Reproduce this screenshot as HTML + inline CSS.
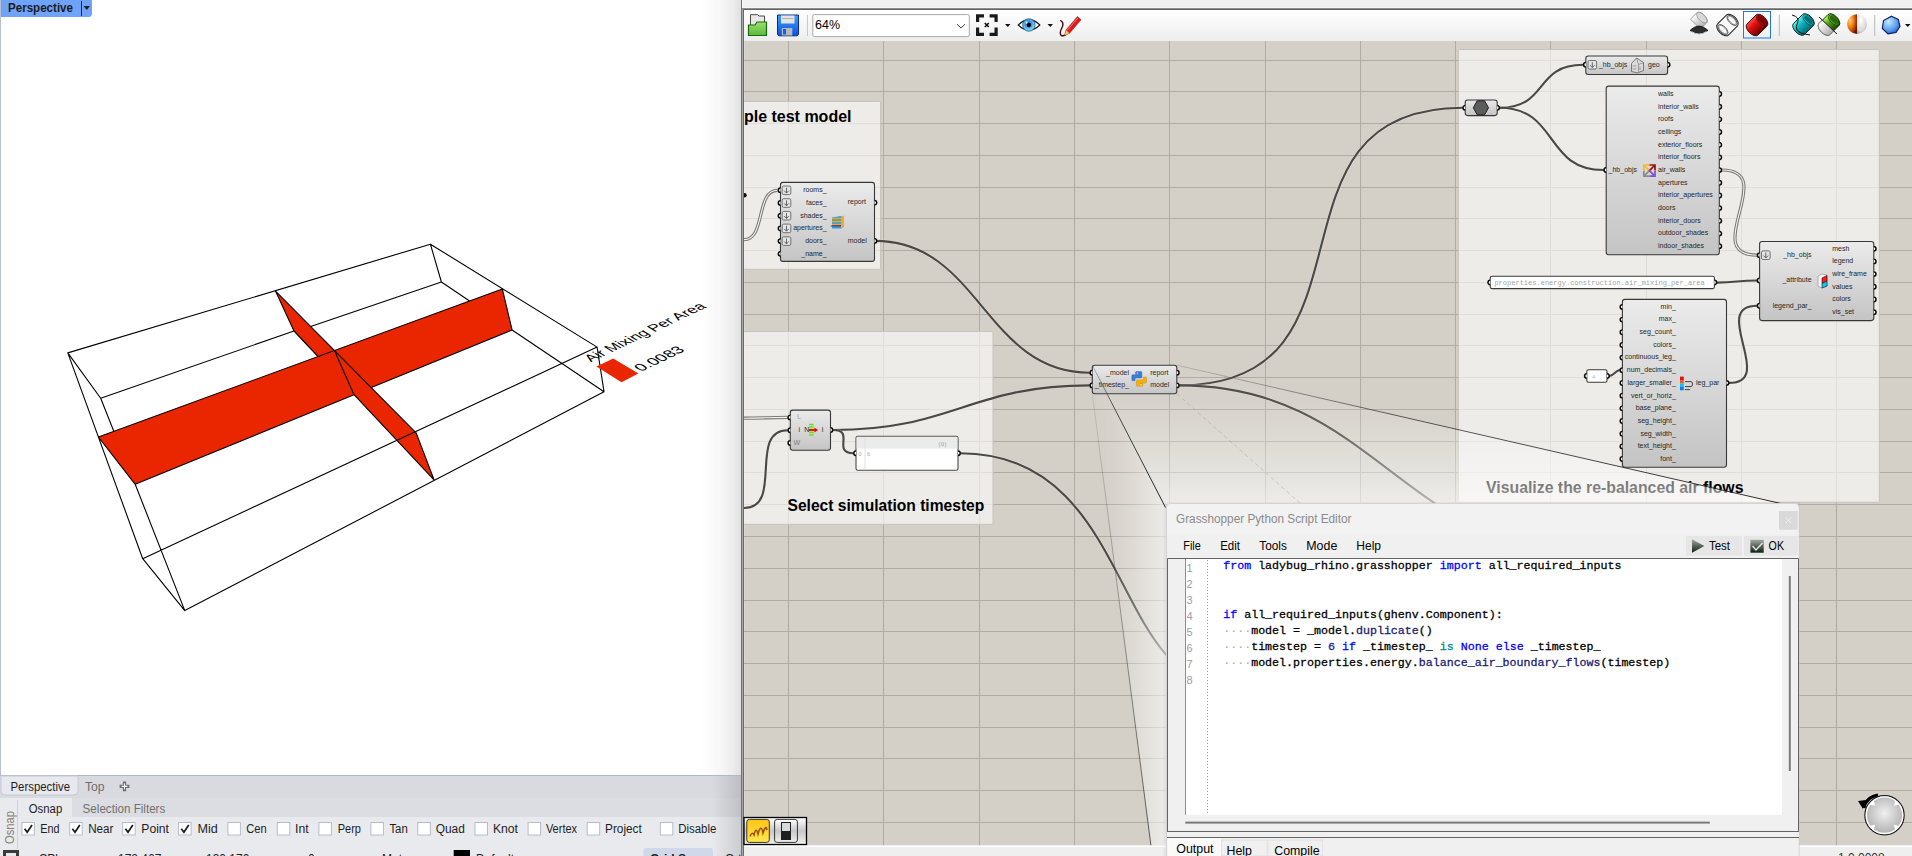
<!DOCTYPE html>
<html><head><meta charset="utf-8"><style>
html,body{margin:0;padding:0;width:1912px;height:856px;overflow:hidden;background:#fff}
svg{display:block}
svg{font-family:"Liberation Sans",sans-serif}
.mono{font-family:"Liberation Mono",monospace}
</style></head><body>
<svg width="1912" height="856" viewBox="0 0 1912 856">
<defs>
 <linearGradient id="vpEdge" x1="0" x2="1" y1="0" y2="0">
  <stop offset="0" stop-color="#ffffff"/>
  <stop offset="0.5" stop-color="#f7f7f7"/>
  <stop offset="0.8" stop-color="#ededed"/>
  <stop offset="1" stop-color="#e0e0e0"/>
 </linearGradient>
 <linearGradient id="compFill" x1="0" x2="0" y1="0" y2="1">
  <stop offset="0" stop-color="#ebebeb"/>
  <stop offset="1" stop-color="#c4c4c4"/>
 </linearGradient>
 <clipPath id="canvasClip"><rect x="744" y="41" width="1168" height="804.5"/></clipPath>
</defs>
<!-- ===== Rhino viewport ===== -->
<rect x="0" y="0" width="741" height="775" fill="#ffffff"/>
<rect x="700" y="0" width="41" height="775" fill="url(#vpEdge)"/>
<rect x="0" y="0" width="1" height="775" fill="#b8c0d0"/>
<path d="M1,0 H92 V15 L90,17 H1 Z" fill="#6ea3f9"/>
<text x="8" y="12" font-size="12" font-weight="bold" fill="#1c1c1c" textLength="65" lengthAdjust="spacingAndGlyphs">Perspective</text>
<rect x="81" y="1" width="1" height="15" fill="#222"/>
<path d="M83.5,6 L90,6 L86.75,10 Z" fill="#222"/>

<!-- model -->
<path d="M98.4,437.0 L502.3,289.0 L512.1,330.0 L135.2,484.3 Z" fill="#ea2600"/>
<path d="M275.6,291.2 L416.1,432.8 L434.0,479.8 L294.0,331.0 Z" fill="#ea2600"/>
<path d="M67.8,352.9 L430.4,244.2 M430.4,244.2 L597.1,347.1 M597.1,347.1 L142.7,558.7 M142.7,558.7 L67.8,352.9 M100.7,398.2 L294.0,331.0 M310.7,326.6 L441.4,282.0 M441.4,282.0 L469.6,301.0 M512.1,330.0 L604.0,391.7 M604.0,391.7 L184.8,610.6 M184.8,610.6 L135.2,484.3 M113.8,431.3 L100.7,398.2 M67.8,352.9 L100.7,398.2 M430.4,244.2 L441.4,282.0 M597.1,347.1 L604.0,391.7 M142.7,558.7 L184.8,610.6 M98.4,437.0 L502.3,289.0 M502.3,289.0 L512.1,330.0 M98.4,437.0 L135.2,484.3 M135.2,484.3 L354.0,394.7 M371.3,387.6 L512.1,330.0 M275.6,291.2 L416.1,432.8 M416.1,432.8 L434.0,479.8 M275.6,291.2 L294.0,331.0 M294.0,331.0 L318.0,356.5 M354.0,394.7 L434.0,479.8 M334.4,350.5 L354.0,394.7" stroke="#000" stroke-width="1.1" fill="none" stroke-linecap="round"/>
<path d="M596.4,366.5 L613.3,358.4 L638.4,373.6 L621.5,382.3 Z" fill="#ea2600"/>
<text font-size="10" fill="#000" transform="matrix(1.3550,-0.6434,1.2339,0.7612,591,362.2)">Air Mixing Per Area</text>
<text font-size="10" fill="#000" transform="matrix(1.4634,-0.6949,1.2339,0.7612,641,371.8)">0.0083</text>
<!-- ===== bottom rhino panel ===== -->
<rect x="0" y="775" width="741" height="81" fill="#d9dadf"/>
<rect x="0" y="775" width="741" height="1" fill="#b0b8cc"/>
<rect x="0" y="776" width="741" height="22" fill="#d9dadf"/>
<path d="M1,776 H78 V791 Q78,795 74,795 H5 Q1,795 1,791 Z" fill="#e8e9ee" stroke="#c5cad6" stroke-width="1"/>
<text x="10.5" y="791" font-size="12" fill="#1e1e1e" textLength="59.5" lengthAdjust="spacingAndGlyphs">Perspective</text>
<text x="85" y="791" font-size="12" fill="#707070" textLength="19.6" lengthAdjust="spacingAndGlyphs">Top</text>
<path d="M121.2,786.4 H127.8 M124.5,783.1 V789.7" stroke="#6e6e6e" stroke-width="3.2" stroke-linecap="square" fill="none"/>
<path d="M121.6,786.4 H127.4 M124.5,783.5 V789.3" stroke="#ffffff" stroke-width="1.1" fill="none"/>
<rect x="0" y="798" width="741" height="51" fill="#e9eaee"/>
<rect x="72" y="798" width="669" height="19" fill="#dcdde2"/>
<path d="M18,817 V798 H66 Q72,798 72,804 V817 Z" fill="#e9eaee"/>
<rect x="0" y="798" width="17" height="51" fill="#e9eaee"/>
<path d="M17.5,800 V849" stroke="#cdd1da" stroke-width="1"/>
<text transform="translate(13.5,844) rotate(-90)" font-size="12" fill="#8a7f75" textLength="33" lengthAdjust="spacingAndGlyphs">Osnap</text>
<text x="28.8" y="813" font-size="12" fill="#1e1e1e" textLength="33.4" lengthAdjust="spacingAndGlyphs">Osnap</text>
<text x="82.6" y="813" font-size="12" fill="#707070" textLength="82.7" lengthAdjust="spacingAndGlyphs">Selection Filters</text>
<rect x="21.9" y="822.5" width="12.5" height="12.5" fill="#fff" stroke="#b4bccc" stroke-width="1"/>
<path d="M24.6,828.8 L27.2,832.2 L32.0,825" stroke="#1a1a1a" stroke-width="1.7" fill="none"/>
<text x="40.3" y="833" font-size="12" fill="#1e1e1e" textLength="19.3" lengthAdjust="spacingAndGlyphs">End</text>
<rect x="69.7" y="822.5" width="12.5" height="12.5" fill="#fff" stroke="#b4bccc" stroke-width="1"/>
<path d="M72.4,828.8 L75.0,832.2 L79.8,825" stroke="#1a1a1a" stroke-width="1.7" fill="none"/>
<text x="88.2" y="833" font-size="12" fill="#1e1e1e" textLength="25.2" lengthAdjust="spacingAndGlyphs">Near</text>
<rect x="122.7" y="822.5" width="12.5" height="12.5" fill="#fff" stroke="#b4bccc" stroke-width="1"/>
<path d="M125.4,828.8 L128.0,832.2 L132.8,825" stroke="#1a1a1a" stroke-width="1.7" fill="none"/>
<text x="141.3" y="833" font-size="12" fill="#1e1e1e" textLength="27.7" lengthAdjust="spacingAndGlyphs">Point</text>
<rect x="178.6" y="822.5" width="12.5" height="12.5" fill="#fff" stroke="#b4bccc" stroke-width="1"/>
<path d="M181.3,828.8 L183.9,832.2 L188.7,825" stroke="#1a1a1a" stroke-width="1.7" fill="none"/>
<text x="197.4" y="833" font-size="12" fill="#1e1e1e" textLength="20.3" lengthAdjust="spacingAndGlyphs">Mid</text>
<rect x="227.9" y="822.5" width="12.5" height="12.5" fill="#fff" stroke="#b4bccc" stroke-width="1"/>
<text x="246.2" y="833" font-size="12" fill="#1e1e1e" textLength="20.5" lengthAdjust="spacingAndGlyphs">Cen</text>
<rect x="277.3" y="822.5" width="12.5" height="12.5" fill="#fff" stroke="#b4bccc" stroke-width="1"/>
<text x="295.1" y="833" font-size="12" fill="#1e1e1e" textLength="13.6" lengthAdjust="spacingAndGlyphs">Int</text>
<rect x="318.9" y="822.5" width="12.5" height="12.5" fill="#fff" stroke="#b4bccc" stroke-width="1"/>
<text x="337.7" y="833" font-size="12" fill="#1e1e1e" textLength="23.3" lengthAdjust="spacingAndGlyphs">Perp</text>
<rect x="370.9" y="822.5" width="12.5" height="12.5" fill="#fff" stroke="#b4bccc" stroke-width="1"/>
<text x="389.4" y="833" font-size="12" fill="#1e1e1e" textLength="18.4" lengthAdjust="spacingAndGlyphs">Tan</text>
<rect x="417.8" y="822.5" width="12.5" height="12.5" fill="#fff" stroke="#b4bccc" stroke-width="1"/>
<text x="435.7" y="833" font-size="12" fill="#1e1e1e" textLength="29.2" lengthAdjust="spacingAndGlyphs">Quad</text>
<rect x="475.0" y="822.5" width="12.5" height="12.5" fill="#fff" stroke="#b4bccc" stroke-width="1"/>
<text x="493" y="833" font-size="12" fill="#1e1e1e" textLength="25" lengthAdjust="spacingAndGlyphs">Knot</text>
<rect x="528.1" y="822.5" width="12.5" height="12.5" fill="#fff" stroke="#b4bccc" stroke-width="1"/>
<text x="545.9" y="833" font-size="12" fill="#1e1e1e" textLength="31.2" lengthAdjust="spacingAndGlyphs">Vertex</text>
<rect x="587.2" y="822.5" width="12.5" height="12.5" fill="#fff" stroke="#b4bccc" stroke-width="1"/>
<text x="605" y="833" font-size="12" fill="#1e1e1e" textLength="36.8" lengthAdjust="spacingAndGlyphs">Project</text>
<rect x="660.3" y="822.5" width="12.5" height="12.5" fill="#fff" stroke="#b4bccc" stroke-width="1"/>
<text x="678.2" y="833" font-size="12" fill="#1e1e1e" textLength="38.1" lengthAdjust="spacingAndGlyphs">Disable</text>
<rect x="0" y="849" width="741" height="7" fill="#e9eaee"/>
<rect x="4.5" y="851.5" width="13" height="10" fill="none" stroke="#3a3a3a" stroke-width="3"/>
<text x="38.7" y="863" font-size="12" fill="#1e1e1e">CPl</text>
<text x="118" y="863" font-size="12" fill="#1e1e1e">172.467</text>
<text x="206" y="863" font-size="12" fill="#1e1e1e">130.170</text>
<text x="308" y="863" font-size="12" fill="#1e1e1e">0</text>
<text x="382" y="863" font-size="12" fill="#1e1e1e">Meters</text>
<text x="476" y="863" font-size="12" fill="#1e1e1e">Default</text>
<text x="725" y="863" font-size="12" fill="#1e1e1e">Ortho</text>
<rect x="453.7" y="850" width="16.3" height="10" fill="#000"/>
<rect x="643.5" y="848" width="69.4" height="10" rx="2" fill="#d0d8ea"/>
<text x="650" y="863" font-size="12" font-weight="bold" fill="#1e1e1e">Grid Snap</text>
<defs><linearGradient id="panEdge" x1="0" x2="1" y1="0" y2="0"><stop offset="0" stop-color="#000" stop-opacity="0"/><stop offset="1" stop-color="#000" stop-opacity="0.13"/></linearGradient></defs>
<rect x="712" y="776" width="29" height="80" fill="url(#panEdge)"/>
<!-- ===== GH window ===== -->
<rect x="741" y="0" width="1171" height="856" fill="#f0f0f0"/>
<rect x="741" y="0" width="1" height="856" fill="#727272"/>
<rect x="742" y="0" width="1" height="8" fill="#f6f6f6"/>
<rect x="742" y="9" width="1" height="847" fill="#a6a6a6"/>
<rect x="743" y="9" width="1" height="847" fill="#6a6a6a"/>
<rect x="742" y="7" width="1170" height="1" fill="#f5f5f5"/>
<rect x="742" y="8" width="1170" height="1" fill="#8c8c8c"/>
<rect x="743" y="9" width="1169" height="1" fill="#646464"/>
<rect x="744" y="10" width="1168" height="31" fill="#fafafa"/>
<defs><linearGradient id="tbG" x1="0" x2="0" y1="0" y2="1"><stop offset="0" stop-color="#ffffff"/><stop offset="1" stop-color="#ededed"/></linearGradient><linearGradient id="fgG" x1="0" x2="0" y1="0" y2="1"><stop offset="0" stop-color="#9be070"/><stop offset="1" stop-color="#5cb838"/></linearGradient><linearGradient id="flG" x1="0" x2="0" y1="0" y2="1"><stop offset="0" stop-color="#40a0ff"/><stop offset="1" stop-color="#0a50e0"/></linearGradient><radialGradient id="redCyl" cx="0.35" cy="0.3" r="0.8"><stop offset="0" stop-color="#ff8080"/><stop offset="0.5" stop-color="#d01010"/><stop offset="1" stop-color="#700000"/></radialGradient><radialGradient id="cyanCyl" cx="0.4" cy="0.3" r="0.8"><stop offset="0" stop-color="#a0ffff"/><stop offset="0.5" stop-color="#10b8c8"/><stop offset="1" stop-color="#006070"/></radialGradient><radialGradient id="grnCyl" cx="0.4" cy="0.3" r="0.8"><stop offset="0" stop-color="#d0ff90"/><stop offset="0.5" stop-color="#60b010"/><stop offset="1" stop-color="#2a5a00"/></radialGradient><radialGradient id="graySph" cx="0.35" cy="0.3" r="0.8"><stop offset="0" stop-color="#ffffff"/><stop offset="0.6" stop-color="#d0d0d0"/><stop offset="1" stop-color="#808080"/></radialGradient><radialGradient id="blueSph" cx="0.35" cy="0.3" r="0.8"><stop offset="0" stop-color="#c8e8ff"/><stop offset="0.6" stop-color="#5aa0f0"/><stop offset="1" stop-color="#2050b0"/></radialGradient><radialGradient id="navG" cx="0.5" cy="0.45" r="0.6"><stop offset="0" stop-color="#f0f0f0"/><stop offset="1" stop-color="#a8a8a8"/></radialGradient><linearGradient id="silverG" x1="0" x2="0" y1="0" y2="1"><stop offset="0" stop-color="#ffffff"/><stop offset="0.5" stop-color="#c8c8c8"/><stop offset="1" stop-color="#f0f0f0"/></linearGradient><linearGradient id="yelG" x1="0" x2="0" y1="0" y2="1"><stop offset="0" stop-color="#ffc414"/><stop offset="1" stop-color="#ffe850"/></linearGradient></defs>
<rect x="744" y="10" width="1168" height="31" fill="url(#tbG)"/><rect x="744" y="41" width="1168" height="804.5" fill="#dad6d0" fill-opacity="0"/>
<path d="M750.5,30 V14.7 H757.5 L759,16 H764.5 V30 Z" fill="#e8e8e8" stroke="#4a4a4a" stroke-width="1"/>
<path d="M748.5,35.5 V25 H755 L757,22 H766.5 V35.5 Z" fill="url(#fgG)" stroke="#1a6a10" stroke-width="1.2"/>
<path d="M777.5,15 H798.5 V34.5 L797,35.8 H779 L777.5,34.5 Z" fill="url(#flG)" stroke="#0a2a80" stroke-width="1"/>
<rect x="781" y="15.5" width="13.5" height="8" fill="#e4e4e4"/><rect x="782" y="18" width="11.5" height="1" fill="#b0b0b0"/>
<rect x="781.8" y="28" width="10.5" height="7.5" fill="#b8b8b8"/><rect x="783" y="29" width="3" height="5.5" fill="#1060f0"/>
<rect x="807" y="15" width="1" height="21" fill="#c8c8c8"/>
<rect x="812.8" y="14.6" width="156.5" height="22" rx="1.5" fill="#ffffff" stroke="#a8a8a8" stroke-width="1"/>
<text x="815" y="29.4" font-size="12.5" fill="#000">64%</text>
<path d="M957,24.2 L961,28 L965,24.2" stroke="#444" stroke-width="1" fill="none"/>
<path d="M977.6,22 V15.8 H984 M989.6,15.8 H996.1 V22 M996.1,27.4 V34.3 H989.6 M984,34.3 H977.6 V27.4" stroke="#1a1a1a" stroke-width="3.2" fill="none"/>
<path d="M984.8,23 L988.8,27 M988.8,23 L984.8,27" stroke="#111" stroke-width="1.6"/>
<path d="M1005,24 H1010.5 L1007.75,27 Z" fill="#111"/>
<defs><radialGradient id="irisG" cx="0.45" cy="0.4" r="0.6"><stop offset="0" stop-color="#2050c0"/><stop offset="0.35" stop-color="#3a90e0"/><stop offset="1" stop-color="#90e8ff"/></radialGradient></defs>
<path d="M1018.3,25 Q1029,14.5 1039.8,25 Q1029,35.5 1018.3,25 Z" fill="#ffffff" stroke="#1a1a1a" stroke-width="1.2"/>
<circle cx="1028.9" cy="25" r="6.2" fill="url(#irisG)" stroke="#0a5a80" stroke-width="0.8"/><circle cx="1028.9" cy="25" r="2.2" fill="#000"/><circle cx="1026.6" cy="22.6" r="1.1" fill="#fff"/>
<path d="M1047.5,24 H1053 L1050.25,27 Z" fill="#111"/>
<path d="M1060.2,20.3 Q1064,22 1062.5,26.5 Q1059,33 1061,35.3 Q1063,36.5 1066,34.6" stroke="#3a0808" stroke-width="1.4" fill="none"/>
<path d="M1064.5,35.5 L1066,30 L1077.5,16.5 L1081,19.8 L1069.5,33.3 Z" fill="#e01818" stroke="#7a1010" stroke-width="0.5"/>
<path d="M1064.5,35.5 L1066,30 L1069.5,33.3 Z" fill="#f0c060"/><path d="M1067,30.5 L1078,17.8" stroke="#ff9090" stroke-width="0.8"/>
<defs><linearGradient id="redB" x1="0" x2="0" y1="0" y2="1"><stop offset="0" stop-color="#ff4a4a"/><stop offset="0.35" stop-color="#e01010"/><stop offset="1" stop-color="#6a0000"/></linearGradient><linearGradient id="cyanB" x1="0" x2="0" y1="0" y2="1"><stop offset="0" stop-color="#60f0f0"/><stop offset="0.4" stop-color="#10b0b8"/><stop offset="1" stop-color="#006a70"/></linearGradient><linearGradient id="grnB" x1="0" x2="0" y1="0" y2="1"><stop offset="0" stop-color="#c0ff60"/><stop offset="0.4" stop-color="#50a010"/><stop offset="1" stop-color="#1a4a00"/></linearGradient><linearGradient id="grayB" x1="0" x2="0" y1="0" y2="1"><stop offset="0" stop-color="#ffffff"/><stop offset="1" stop-color="#b0b0b0"/></linearGradient><radialGradient id="sphO" cx="0.3" cy="0.3" r="0.8"><stop offset="0" stop-color="#ffd080"/><stop offset="0.45" stop-color="#f08010"/><stop offset="1" stop-color="#701000"/></radialGradient><radialGradient id="sphW" cx="0.4" cy="0.3" r="0.9"><stop offset="0" stop-color="#ffffff"/><stop offset="0.6" stop-color="#dadada"/><stop offset="1" stop-color="#707070"/></radialGradient></defs>
<g transform="translate(1699,20.5) rotate(-45)"><path d="M-5,-7 L4,-7 A3.5,7 0 0 1 4,7 L-5,7 Z" fill="url(#grayB)" stroke="#888" stroke-width="0.8"/><ellipse cx="4" cy="0" rx="3.3" ry="6.6" fill="#d8d8d8" stroke="#888" stroke-width="0.6"/></g>
<path d="M1690,30.5 Q1699,21.5 1708,30.5 Q1699,37 1690,30.5 Z" fill="#2e2e2e" stroke="#111" stroke-width="0.8"/><path d="M1691.5,31.5 Q1699,36.5 1706.5,31.5" stroke="#e8e8e8" stroke-width="0.8" fill="none"/>
<g transform="translate(1727.5,25) rotate(-45)"><path d="M-6.5,-7.75 L6.5,-7.75 A4.2,7.75 0 0 1 6.5,7.75 L-6.5,7.75 A4.2,7.75 0 0 1 -6.5,-7.75 Z" fill="#fafafa" stroke="#1a1a1a" stroke-width="0.95"/><ellipse cx="6.5" cy="0" rx="3.2" ry="6.4" fill="none" stroke="#222" stroke-width="0.7"/><ellipse cx="6.5" cy="0" rx="2.3" ry="5.2" fill="none" stroke="#444" stroke-width="0.5"/><ellipse cx="-6.5" cy="0" rx="3.2" ry="6.4" fill="none" stroke="#222" stroke-width="0.7"/><ellipse cx="-6.5" cy="0" rx="2.3" ry="5.2" fill="none" stroke="#444" stroke-width="0.5"/></g>
<rect x="1743.5" y="11.5" width="27" height="26.5" fill="none" stroke="#1a7ae8" stroke-width="1"/>
<g transform="translate(1757,25) rotate(-45)"><path d="M-6.5,-7.75 L6.5,-7.75 A4.2,7.75 0 0 1 6.5,7.75 L-6.5,7.75 A4.2,7.75 0 0 1 -6.5,-7.75 Z" fill="url(#redB)" stroke="#3a0000" stroke-width="0.9"/><ellipse cx="6.5" cy="0" rx="3.3" ry="6.6" fill="#c00808" stroke="#3a0000" stroke-width="0.6"/><ellipse cx="6.8" cy="0.3" rx="2.4" ry="5.3" fill="#7a0000"/></g>
<rect x="1778.8" y="15" width="1" height="21" fill="#b8b8b8"/>
<g transform="translate(1803.5,24.5) rotate(-45)"><path d="M-6.5,-7.75 L6.5,-7.75 A4.2,7.75 0 0 1 6.5,7.75 L-6.5,7.75 A4.2,7.75 0 0 1 -6.5,-7.75 Z" fill="url(#cyanB)" stroke="#002a2a" stroke-width="0.9"/><ellipse cx="6.5" cy="0" rx="3.3" ry="6.6" fill="#20c8d0" stroke="#002a2a" stroke-width="0.6"/><ellipse cx="6.8" cy="0.3" rx="2.4" ry="5.3" fill="#007078"/></g>
<path d="M1792,15 Q1800,17 1797.5,23 Q1794,30 1801,33 Q1806,34.5 1810,35" stroke="#111" stroke-width="1" fill="none"/>
<g transform="translate(1829,24.5) rotate(-45)"><path d="M-6.5,-7.75 L6.5,-7.75 A4.2,7.75 0 0 1 6.5,7.75 L-6.5,7.75 A4.2,7.75 0 0 1 -6.5,-7.75 Z" fill="url(#grnB)" stroke="#0a2a00" stroke-width="0.9"/><path d="M-6.5,-7.75 L-1,-7.75 L-1,7.75 L-6.5,7.75 A4.2,7.75 0 0 1 -6.5,-7.75 Z" fill="url(#grayB)" stroke="#777" stroke-width="0.6"/><ellipse cx="6.5" cy="0" rx="3.3" ry="6.6" fill="#60b020" stroke="#0a2a00" stroke-width="0.6"/><ellipse cx="6.8" cy="0.3" rx="2.4" ry="5.3" fill="#2a6a00"/></g>
<path d="M1819,17 L1837,34" stroke="#111" stroke-width="1"/>
<path d="M1857,14.2 A9.9,9.9 0 0 0 1857,34 Z" fill="url(#sphO)"/><path d="M1857,14.2 A9.9,9.9 0 0 1 1857,34 Z" fill="url(#sphW)"/>
<rect x="1874.2" y="15" width="1" height="21" fill="#b8b8b8"/>
<path d="M1891.5,16.2 L1898.3,19.4 L1900,26.5 L1896,32.5 L1888,33.9 L1882.3,28.5 L1883.5,20.5 Z" fill="url(#blueSph)" stroke="#0a1a6a" stroke-width="1.1"/>
<path d="M1905,24 H1910.5 L1907.75,27 Z" fill="#111"/>
<rect x="744" y="41" width="1168" height="804.5" fill="#d4d0c8"/><rect x="744" y="41" width="1" height="804.5" fill="#dcd8d2"/>
<path d="M788.5,41 V845.5 M883.5,41 V845.5 M979.5,41 V845.5 M1074.5,41 V845.5 M1169.5,41 V845.5 M1265.5,41 V845.5 M1360.5,41 V845.5 M1455.5,41 V845.5 M1550.5,41 V845.5 M1646.5,41 V845.5 M1741.5,41 V845.5 M1836.5,41 V845.5 M744,60.5 H1912 M744,91.5 H1912 M744,123.5 H1912 M744,155.5 H1912 M744,187.5 H1912 M744,218.5 H1912 M744,250.5 H1912 M744,282.5 H1912 M744,314.5 H1912 M744,345.5 H1912 M744,377.5 H1912 M744,409.5 H1912 M744,441.5 H1912 M744,472.5 H1912 M744,504.5 H1912 M744,536.5 H1912 M744,568.5 H1912 M744,600.5 H1912 M744,631.5 H1912 M744,663.5 H1912 M744,695.5 H1912 M744,727.5 H1912 M744,758.5 H1912 M744,790.5 H1912 M744,822.5 H1912" stroke="#b0aca4" stroke-width="1" fill="none"/>
<g clip-path="url(#canvasClip)">
<rect x="720" y="101.5" width="160.5" height="167.8" rx="1" fill="#ffffff" fill-opacity="0.6" stroke="#c6c3bc" stroke-width="1"/>
<text x="851.5" y="122.3" font-size="16" font-weight="bold" fill="#000" text-anchor="end">Create a simple test model</text>
<rect x="720" y="331.5" width="273" height="192.8" rx="1" fill="#ffffff" fill-opacity="0.6" stroke="#c6c3bc" stroke-width="1"/>
<text x="787.5" y="510.5" font-size="16" font-weight="bold" fill="#000" textLength="196.8" lengthAdjust="spacingAndGlyphs">Select simulation timestep</text>
<rect x="1458.3" y="49.5" width="421" height="452.7" rx="1" fill="#ffffff" fill-opacity="0.6" stroke="#c6c3bc" stroke-width="1"/>
<text x="1486" y="493.4" font-size="16" font-weight="bold" fill="#000" textLength="257.5" lengthAdjust="spacingAndGlyphs">Visualize the re-balanced air flows</text>
<path d="M744,239.6 C766,239.6 755.5,190.3 777.5,190.3" stroke="#7a7874" stroke-width="3.2" fill="none"/><path d="M744,239.6 C766,239.6 755.5,190.3 777.5,190.3" stroke="#f4f4f2" stroke-width="1.1" fill="none"/>
<path d="M875,240.9 C980,240.9 984.8,372.7 1089.8,372.7" stroke="#f0eee9" stroke-opacity="0.35" stroke-width="3.2" fill="none"/><path d="M875,240.9 C980,240.9 984.8,372.7 1089.8,372.7" stroke="#4a4844" stroke-width="2.1" fill="none"/>
<path d="M744,418.2 C764,418.2 767.6,417.4 787.6,417.4" stroke="#7a7874" stroke-width="3.2" fill="none"/><path d="M744,418.2 C764,418.2 767.6,417.4 787.6,417.4" stroke="#f4f4f2" stroke-width="1.1" fill="none"/>
<path d="M744,508 C784,508 747.6,430.2 787.6,430.2" stroke="#f0eee9" stroke-opacity="0.35" stroke-width="3.2" fill="none"/><path d="M744,508 C784,508 747.6,430.2 787.6,430.2" stroke="#4a4844" stroke-width="2.1" fill="none"/>
<path d="M833.3,430 C953.3,430 969.8,385.4 1089.8,385.4" stroke="#f0eee9" stroke-opacity="0.35" stroke-width="3.2" fill="none"/><path d="M833.3,430 C953.3,430 969.8,385.4 1089.8,385.4" stroke="#4a4844" stroke-width="2.1" fill="none"/>
<path d="M833.3,430 C855.3,430 831.5,453.2 853.5,453.2" stroke="#f0eee9" stroke-opacity="0.35" stroke-width="3.2" fill="none"/><path d="M833.3,430 C855.3,430 831.5,453.2 853.5,453.2" stroke="#4a4844" stroke-width="2.1" fill="none"/>
<path d="M960.5,453.2 C1132,453.2 1112.1,683.7 1225.3,683.7" stroke="#f0eee9" stroke-opacity="0.35" stroke-width="3.2" fill="none"/><path d="M960.5,453.2 C1132,453.2 1112.1,683.7 1225.3,683.7" stroke="#4a4844" stroke-width="2.1" fill="none"/>
<path d="M1179.3,385.4 C1391.3,385.4 1250.7,107.8 1462.7,107.8" stroke="#f0eee9" stroke-opacity="0.35" stroke-width="3.2" fill="none"/><path d="M1179.3,385.4 C1391.3,385.4 1250.7,107.8 1462.7,107.8" stroke="#4a4844" stroke-width="2.1" fill="none"/>
<path d="M1179.3,385.4 C1376.3,385.4 1401.6,554.2 1598.6,554.2" stroke="#f0eee9" stroke-opacity="0.35" stroke-width="3.2" fill="none"/><path d="M1179.3,385.4 C1376.3,385.4 1401.6,554.2 1598.6,554.2" stroke="#4a4844" stroke-width="2.1" fill="none"/>
<path d="M1499.2,107.8 C1549.2,107.8 1533.3,64.8 1583.3,64.8" stroke="#f0eee9" stroke-opacity="0.35" stroke-width="3.2" fill="none"/><path d="M1499.2,107.8 C1549.2,107.8 1533.3,64.8 1583.3,64.8" stroke="#4a4844" stroke-width="2.1" fill="none"/>
<path d="M1499.2,107.8 C1559.2,107.8 1543.7,170 1603.7,170" stroke="#f0eee9" stroke-opacity="0.35" stroke-width="3.2" fill="none"/><path d="M1499.2,107.8 C1559.2,107.8 1543.7,170 1603.7,170" stroke="#4a4844" stroke-width="2.1" fill="none"/>
<path d="M1721.8,170 C1779.8,170 1699.1,255.2 1757.1,255.2" stroke="#7a7874" stroke-width="3.2" fill="none"/><path d="M1721.8,170 C1779.8,170 1699.1,255.2 1757.1,255.2" stroke="#f4f4f2" stroke-width="1.1" fill="none"/>
<path d="M1716.9,282.6 C1736.9,282.6 1737.1,280.5 1757.1,280.5" stroke="#f0eee9" stroke-opacity="0.35" stroke-width="3.2" fill="none"/><path d="M1716.9,282.6 C1736.9,282.6 1737.1,280.5 1757.1,280.5" stroke="#4a4844" stroke-width="2.1" fill="none"/>
<path d="M1729,382.9 C1777,382.9 1709.1,305.7 1757.1,305.7" stroke="#f0eee9" stroke-opacity="0.35" stroke-width="3.2" fill="none"/><path d="M1729,382.9 C1777,382.9 1709.1,305.7 1757.1,305.7" stroke="#4a4844" stroke-width="2.1" fill="none"/>
<path d="M1609.5,376 C1612.5,376 1616.9,370 1619.9,370" stroke="#f0eee9" stroke-opacity="0.35" stroke-width="3.2" fill="none"/><path d="M1609.5,376 C1612.5,376 1616.9,370 1619.9,370" stroke="#4a4844" stroke-width="2.1" fill="none"/>
<circle cx="744.5" cy="195.2" r="2.2" fill="#111"/>
<rect x="780.5" y="182.4" width="94" height="79" rx="2.5" fill="url(#compFill)" stroke="#383838" stroke-width="1.1"/>
<path d="M780.5,188.1 A2.2,2.2 0 0 0 780.5,192.5" fill="#fff" stroke="#0a0a0a" stroke-width="1.5"/>
<rect x="782.2" y="186" width="8.6" height="8.6" rx="1.5" fill="#e4e4e4" stroke="#555" stroke-width="0.8"/><path d="M786.5,187.7 V192.9 M784.2,190.7 L786.5,193.1 L788.8,190.7" stroke="#555" stroke-width="0.9" fill="none"/>
<text x="826.6" y="192.15" font-size="7" fill="#262626" text-anchor="end" >rooms_</text>
<path d="M780.5,200.8 A2.2,2.2 0 0 0 780.5,205.2" fill="#fff" stroke="#0a0a0a" stroke-width="1.5"/>
<rect x="782.2" y="198.7" width="8.6" height="8.6" rx="1.5" fill="#e4e4e4" stroke="#555" stroke-width="0.8"/><path d="M786.5,200.4 V205.6 M784.2,203.4 L786.5,205.8 L788.8,203.4" stroke="#555" stroke-width="0.9" fill="none"/>
<text x="826.6" y="204.85" font-size="7" fill="#262626" text-anchor="end" >faces_</text>
<path d="M780.5,213.5 A2.2,2.2 0 0 0 780.5,217.9" fill="#fff" stroke="#0a0a0a" stroke-width="1.5"/>
<rect x="782.2" y="211.4" width="8.6" height="8.6" rx="1.5" fill="#e4e4e4" stroke="#555" stroke-width="0.8"/><path d="M786.5,213.1 V218.3 M784.2,216.1 L786.5,218.5 L788.8,216.1" stroke="#555" stroke-width="0.9" fill="none"/>
<text x="826.6" y="217.55" font-size="7" fill="#262626" text-anchor="end" >shades_</text>
<path d="M780.5,226.2 A2.2,2.2 0 0 0 780.5,230.6" fill="#fff" stroke="#0a0a0a" stroke-width="1.5"/>
<rect x="782.2" y="224.1" width="8.6" height="8.6" rx="1.5" fill="#e4e4e4" stroke="#555" stroke-width="0.8"/><path d="M786.5,225.8 V231 M784.2,228.8 L786.5,231.2 L788.8,228.8" stroke="#555" stroke-width="0.9" fill="none"/>
<text x="826.6" y="230.25" font-size="7" fill="#262626" text-anchor="end" >apertures_</text>
<path d="M780.5,238.9 A2.2,2.2 0 0 0 780.5,243.3" fill="#fff" stroke="#0a0a0a" stroke-width="1.5"/>
<rect x="782.2" y="236.8" width="8.6" height="8.6" rx="1.5" fill="#e4e4e4" stroke="#555" stroke-width="0.8"/><path d="M786.5,238.5 V243.7 M784.2,241.5 L786.5,243.9 L788.8,241.5" stroke="#555" stroke-width="0.9" fill="none"/>
<text x="826.6" y="242.95" font-size="7" fill="#262626" text-anchor="end" >doors_</text>
<path d="M780.5,251.6 A2.2,2.2 0 0 0 780.5,256" fill="#fff" stroke="#0a0a0a" stroke-width="1.5"/>
<text x="826.6" y="255.65" font-size="7" fill="#262626" text-anchor="end" >_name_</text>
<path d="M874.5,200.4 A2.2,2.2 0 0 1 874.5,204.8" fill="#fff" stroke="#0a0a0a" stroke-width="1.5"/>
<text x="847.7" y="204.45" font-size="7" fill="#262626" text-anchor="start" >report</text>
<path d="M874.5,238.7 A2.2,2.2 0 0 1 874.5,243.1" fill="#fff" stroke="#0a0a0a" stroke-width="1.5"/>
<text x="847.7" y="242.75" font-size="7" fill="#262626" text-anchor="start" >model</text>
<g transform="translate(830,215.5)"><path d="M2,2 L11,0.5 L14,2 V11 L11,13 H2 Z" fill="#2aa0d8"/><path d="M2,3 H11 M2,6 H11 M2,9 H11" stroke="#f5a623" stroke-width="1.3"/><path d="M11,1 L14,0 V11 L11,13 Z" fill="#f0a830"/><path d="M0,10.5 L3,9.5 H11 V11 H1 Z" fill="#6a3d8f"/></g>
<rect x="1092.3" y="365.2" width="84.5" height="28.5" rx="2.5" fill="url(#compFill)" stroke="#383838" stroke-width="1.1"/>
<path d="M1092.3,370.5 A2.2,2.2 0 0 0 1092.3,374.9" fill="#fff" stroke="#0a0a0a" stroke-width="1.5"/>
<text x="1129" y="374.55" font-size="7" fill="#262626" text-anchor="end" >_model</text>
<path d="M1092.3,383.2 A2.2,2.2 0 0 0 1092.3,387.6" fill="#fff" stroke="#0a0a0a" stroke-width="1.5"/>
<text x="1129" y="387.25" font-size="7" fill="#262626" text-anchor="end" >_timestep_</text>
<path d="M1176.8,370.5 A2.2,2.2 0 0 1 1176.8,374.9" fill="#fff" stroke="#0a0a0a" stroke-width="1.5"/>
<text x="1150.2" y="374.55" font-size="7" fill="#262626" text-anchor="start" >report</text>
<path d="M1176.8,383.2 A2.2,2.2 0 0 1 1176.8,387.6" fill="#fff" stroke="#0a0a0a" stroke-width="1.5"/>
<text x="1150.2" y="387.25" font-size="7" fill="#262626" text-anchor="start" >model</text>
<g transform="translate(1131.8,371.6) scale(0.92)"><path d="M5,0 H10 Q11,0 11,1 V6 Q11,7 10,7 H5 Q3.5,7 3.5,8.5 V10 H1 Q0,10 0,9 V4.5 Q0,3.5 1,3.5 H7 V3 H4 V1 Q4,0 5,0 Z" fill="#3b7bd6" stroke="#2a5aa0" stroke-width="0.4"/><circle cx="6" cy="1.6" r="0.7" fill="#fff"/><path d="M11,16 H6 Q5,16 5,15 V10 Q5,9 6,9 H11 Q12.5,9 12.5,7.5 V6 H15 Q16,6 16,7 V11.5 Q16,12.5 15,12.5 H9 V13 H12 V15 Q12,16 11,16 Z" fill="#f5b000" stroke="#c07a00" stroke-width="0.4"/><circle cx="10" cy="14.4" r="0.7" fill="#fff"/></g>
<rect x="790.3" y="410.1" width="40.2" height="40.2" rx="2.5" fill="url(#compFill)" stroke="#383838" stroke-width="1.1"/>
<path d="M790.3,415.2 A2.2,2.2 0 0 0 790.3,419.6" fill="#fff" stroke="#0a0a0a" stroke-width="1.5"/>
<text x="797" y="419.25" font-size="7" fill="#a0a0a0" text-anchor="start" >L</text>
<path d="M790.3,428 A2.2,2.2 0 0 0 790.3,432.4" fill="#fff" stroke="#0a0a0a" stroke-width="1.5"/>
<text x="798.6" y="432.05" font-size="7" fill="#262626" text-anchor="start" >i</text>
<path d="M790.3,440.8 A2.2,2.2 0 0 0 790.3,445.2" fill="#fff" stroke="#0a0a0a" stroke-width="1.5"/>
<text x="793.6" y="444.85" font-size="7" fill="#808080" text-anchor="start" >W</text>
<path d="M830.5,427.8 A2.2,2.2 0 0 1 830.5,432.2" fill="#fff" stroke="#0a0a0a" stroke-width="1.5"/>
<text x="821.8" y="431.85" font-size="7" fill="#262626" text-anchor="start" >i</text>
<text x="804.3" y="432.3" font-size="7" fill="#262626">N</text>
<g transform="translate(809,423.7)"><rect x="0" y="0" width="4.6" height="12" fill="#6ad83a"/><path d="M0,2 H4.6 M0,4.5 H4.6 M0,7.5 H4.6 M0,10 H4.6" stroke="#c8ff90" stroke-width="0.8"/><path d="M0,6.3 H6" stroke="#f00000" stroke-width="1.8"/><path d="M5.5,3.8 L9,6.3 L5.5,8.8 Z" fill="#f00000"/></g>
<rect x="856" y="436.3" width="102" height="33.9" rx="1.8" fill="#ffffff" stroke="#4a4a4a" stroke-width="1.1"/>
<rect x="856.6" y="436.9" width="100.8" height="11.7" fill="#ebebeb"/>
<rect x="864.5" y="437" width="1" height="32.6" fill="#e2e2e2"/>
<text x="938" y="445.5" font-size="6" fill="#9a9a9a" font-family="Liberation Serif">{0}</text>
<text x="858.5" y="455.8" font-size="6.2" fill="#a8a8a8" font-family="Liberation Serif">0</text>
<text x="867" y="455.8" font-size="6.2" fill="#a8a8a8" font-family="Liberation Serif">6</text>
<path d="M856,451 A2.2,2.2 0 0 0 856,455.4" fill="#fff" stroke="#0a0a0a" stroke-width="1.5"/>
<path d="M958,451 A2.2,2.2 0 0 1 958,455.4" fill="#fff" stroke="#0a0a0a" stroke-width="1.5"/>
<rect x="1465.2" y="100" width="32" height="15.6" rx="2.5" fill="url(#compFill)" stroke="#383838" stroke-width="1.1"/>
<path d="M1477.2,100.8 H1484.6 L1488.5,107.8 L1484.6,114.8 H1477.2 L1473.3,107.8 Z" fill="#5c5c5c" stroke="#1e1e1e" stroke-width="1"/>
<path d="M1465.2,105.6 A2.2,2.2 0 0 0 1465.2,110" fill="#fff" stroke="#0a0a0a" stroke-width="1.5"/>
<path d="M1497.2,105.6 A2.2,2.2 0 0 1 1497.2,110" fill="#fff" stroke="#0a0a0a" stroke-width="1.5"/>
<rect x="1585.8" y="56" width="81.8" height="18.5" rx="2.5" fill="url(#compFill)" stroke="#383838" stroke-width="1.1"/>
<path d="M1585.8,62.6 A2.2,2.2 0 0 0 1585.8,67" fill="#fff" stroke="#0a0a0a" stroke-width="1.5"/>
<rect x="1588" y="60.5" width="8.6" height="8.6" rx="1.5" fill="#e4e4e4" stroke="#555" stroke-width="0.8"/><path d="M1592.3,62.2 V67.4 M1590,65.2 L1592.3,67.6 L1594.6,65.2" stroke="#555" stroke-width="0.9" fill="none"/>
<text x="1627.3" y="66.65" font-size="7" fill="#262626" text-anchor="end" >_hb_objs</text>
<path d="M1667.6,62.6 A2.2,2.2 0 0 1 1667.6,67" fill="#fff" stroke="#0a0a0a" stroke-width="1.5"/>
<text x="1648" y="66.65" font-size="7" fill="#262626" text-anchor="start" >geo</text>
<path d="M1631.5,71.5 V63.5 L1636.5,58 L1643.5,62.5 V70.5 L1637.5,72.8 Z" fill="#dcdcdc" stroke="#606060" stroke-width="0.8"/><path d="M1636.5,58 L1638.5,64.5 L1643.5,62.5 M1638.5,64.5 V72.5 M1632.5,66 H1636.5 M1632.5,69 H1636.5 M1640,66.5 V70" stroke="#707070" stroke-width="0.6" fill="none"/>
<rect x="1606.2" y="86.1" width="113.1" height="168.6" rx="2.5" fill="url(#compFill)" stroke="#383838" stroke-width="1.1"/>
<path d="M1606.2,167.8 A2.2,2.2 0 0 0 1606.2,172.2" fill="#fff" stroke="#0a0a0a" stroke-width="1.5"/>
<text x="1637" y="171.85" font-size="7" fill="#262626" text-anchor="end" >_hb_objs</text>
<path d="M1719.3,91.8 A2.2,2.2 0 0 1 1719.3,96.2" fill="#fff" stroke="#0a0a0a" stroke-width="1.5"/>
<text x="1658" y="95.85" font-size="7" fill="#262626" text-anchor="start" >walls</text>
<path d="M1719.3,104.48 A2.2,2.2 0 0 1 1719.3,108.88" fill="#fff" stroke="#0a0a0a" stroke-width="1.5"/>
<text x="1658" y="108.53" font-size="7" fill="#262626" text-anchor="start" >interior_walls</text>
<path d="M1719.3,117.16 A2.2,2.2 0 0 1 1719.3,121.56" fill="#fff" stroke="#0a0a0a" stroke-width="1.5"/>
<text x="1658" y="121.21" font-size="7" fill="#262626" text-anchor="start" >roofs</text>
<path d="M1719.3,129.84 A2.2,2.2 0 0 1 1719.3,134.24" fill="#fff" stroke="#0a0a0a" stroke-width="1.5"/>
<text x="1658" y="133.89" font-size="7" fill="#262626" text-anchor="start" >ceilings</text>
<path d="M1719.3,142.52 A2.2,2.2 0 0 1 1719.3,146.92" fill="#fff" stroke="#0a0a0a" stroke-width="1.5"/>
<text x="1658" y="146.57" font-size="7" fill="#262626" text-anchor="start" >exterior_floors</text>
<path d="M1719.3,155.2 A2.2,2.2 0 0 1 1719.3,159.6" fill="#fff" stroke="#0a0a0a" stroke-width="1.5"/>
<text x="1658" y="159.25" font-size="7" fill="#262626" text-anchor="start" >interior_floors</text>
<path d="M1719.3,167.88 A2.2,2.2 0 0 1 1719.3,172.28" fill="#fff" stroke="#0a0a0a" stroke-width="1.5"/>
<text x="1658" y="171.93" font-size="7" fill="#262626" text-anchor="start" >air_walls</text>
<path d="M1719.3,180.56 A2.2,2.2 0 0 1 1719.3,184.96" fill="#fff" stroke="#0a0a0a" stroke-width="1.5"/>
<text x="1658" y="184.61" font-size="7" fill="#262626" text-anchor="start" >apertures</text>
<path d="M1719.3,193.24 A2.2,2.2 0 0 1 1719.3,197.64" fill="#fff" stroke="#0a0a0a" stroke-width="1.5"/>
<text x="1658" y="197.29" font-size="7" fill="#262626" text-anchor="start" >interior_apertures</text>
<path d="M1719.3,205.92 A2.2,2.2 0 0 1 1719.3,210.32" fill="#fff" stroke="#0a0a0a" stroke-width="1.5"/>
<text x="1658" y="209.97" font-size="7" fill="#262626" text-anchor="start" >doors</text>
<path d="M1719.3,218.6 A2.2,2.2 0 0 1 1719.3,223" fill="#fff" stroke="#0a0a0a" stroke-width="1.5"/>
<text x="1658" y="222.65" font-size="7" fill="#262626" text-anchor="start" >interior_doors</text>
<path d="M1719.3,231.28 A2.2,2.2 0 0 1 1719.3,235.68" fill="#fff" stroke="#0a0a0a" stroke-width="1.5"/>
<text x="1658" y="235.33" font-size="7" fill="#262626" text-anchor="start" >outdoor_shades</text>
<path d="M1719.3,243.96 A2.2,2.2 0 0 1 1719.3,248.36" fill="#fff" stroke="#0a0a0a" stroke-width="1.5"/>
<text x="1658" y="248.01" font-size="7" fill="#262626" text-anchor="start" >indoor_shades</text>
<g transform="translate(1643,164.2)" stroke-linecap="square" fill="none"><path d="M0.8,5.5 V0.8 H5.5 M1.2,1.2 L6,6" stroke="#f8b830" stroke-width="1.7"/><path d="M7.3,0.8 H12 V5.5 M11.6,1.2 L6.8,6" stroke="#a01010" stroke-width="1.7"/><path d="M0.8,7.3 V12 H5.5 M1.2,11.6 L6,6.8" stroke="#8a8e8a" stroke-width="1.7"/><path d="M12,7.3 V12 H7.3 M11.6,11.6 L6.8,6.8" stroke="#8050d0" stroke-width="1.7"/></g>
<rect x="1759.6" y="241.5" width="114.2" height="79.1" rx="2.5" fill="url(#compFill)" stroke="#383838" stroke-width="1.1"/>
<path d="M1759.6,253 A2.2,2.2 0 0 0 1759.6,257.4" fill="#fff" stroke="#0a0a0a" stroke-width="1.5"/>
<text x="1811.6" y="257.05" font-size="7" fill="#262626" text-anchor="end" >_hb_objs</text>
<path d="M1759.6,278.3 A2.2,2.2 0 0 0 1759.6,282.7" fill="#fff" stroke="#0a0a0a" stroke-width="1.5"/>
<text x="1811.6" y="282.35" font-size="7" fill="#262626" text-anchor="end" >_attribute</text>
<path d="M1759.6,303.5 A2.2,2.2 0 0 0 1759.6,307.9" fill="#fff" stroke="#0a0a0a" stroke-width="1.5"/>
<text x="1811.6" y="307.55" font-size="7" fill="#262626" text-anchor="end" >legend_par_</text>
<rect x="1761.5" y="250.9" width="8.6" height="8.6" rx="1.5" fill="#e4e4e4" stroke="#555" stroke-width="0.8"/><path d="M1765.8,252.6 V257.8 M1763.5,255.6 L1765.8,258 L1768.1,255.6" stroke="#555" stroke-width="0.9" fill="none"/>
<path d="M1873.8,246.5 A2.2,2.2 0 0 1 1873.8,250.9" fill="#fff" stroke="#0a0a0a" stroke-width="1.5"/>
<text x="1832.2" y="250.55" font-size="7" fill="#262626" text-anchor="start" >mesh</text>
<path d="M1873.8,259.2 A2.2,2.2 0 0 1 1873.8,263.6" fill="#fff" stroke="#0a0a0a" stroke-width="1.5"/>
<text x="1832.2" y="263.25" font-size="7" fill="#262626" text-anchor="start" >legend</text>
<path d="M1873.8,271.9 A2.2,2.2 0 0 1 1873.8,276.3" fill="#fff" stroke="#0a0a0a" stroke-width="1.5"/>
<text x="1832.2" y="275.95" font-size="7" fill="#262626" text-anchor="start" >wire_frame</text>
<path d="M1873.8,284.6 A2.2,2.2 0 0 1 1873.8,289" fill="#fff" stroke="#0a0a0a" stroke-width="1.5"/>
<text x="1832.2" y="288.65" font-size="7" fill="#262626" text-anchor="start" >values</text>
<path d="M1873.8,297.3 A2.2,2.2 0 0 1 1873.8,301.7" fill="#fff" stroke="#0a0a0a" stroke-width="1.5"/>
<text x="1832.2" y="301.35" font-size="7" fill="#262626" text-anchor="start" >colors</text>
<path d="M1873.8,310 A2.2,2.2 0 0 1 1873.8,314.4" fill="#fff" stroke="#0a0a0a" stroke-width="1.5"/>
<text x="1832.2" y="314.05" font-size="7" fill="#262626" text-anchor="start" >vis_set</text>
<g transform="translate(1818,274)"><path d="M0,2 L4,0 L9,1 V12 L4,14 L0,12 Z" fill="#f4f4f4" stroke="#888" stroke-width="0.6"/><path d="M4,4 L9,1.5 V7 L4,9.5 Z" fill="#ff1a1a" stroke="#111" stroke-width="0.6"/><path d="M4,9.5 L9,7 V12 L4,14 Z" fill="#10c8ff" stroke="#111" stroke-width="0.6"/></g>
<rect x="1490.2" y="276.3" width="224.2" height="12.3" rx="1.8" fill="#ffffff" stroke="#3a3a3a" stroke-width="1.1"/>
<text x="1494.4" y="284.5" font-size="6.9" fill="#a4a4a4" font-family="Liberation Mono" textLength="210.4" lengthAdjust="spacingAndGlyphs">properties.energy.construction.air_mixing_per_area</text>
<path d="M1490.2,280.3 A2.2,2.2 0 0 0 1490.2,284.7" fill="#fff" stroke="#0a0a0a" stroke-width="1.5"/>
<path d="M1714.4,280.3 A2.2,2.2 0 0 1 1714.4,284.7" fill="#fff" stroke="#0a0a0a" stroke-width="1.5"/>
<rect x="1622.4" y="299.4" width="104.1" height="167.8" rx="2.5" fill="url(#compFill)" stroke="#383838" stroke-width="1.1"/>
<path d="M1622.4,304.7 A2.2,2.2 0 0 0 1622.4,309.1" fill="#fff" stroke="#0a0a0a" stroke-width="1.5"/>
<text x="1675.8" y="308.75" font-size="7" fill="#262626" text-anchor="end" >min_</text>
<path d="M1622.4,317.38 A2.2,2.2 0 0 0 1622.4,321.78" fill="#fff" stroke="#0a0a0a" stroke-width="1.5"/>
<text x="1675.8" y="321.43" font-size="7" fill="#262626" text-anchor="end" >max_</text>
<path d="M1622.4,330.06 A2.2,2.2 0 0 0 1622.4,334.46" fill="#fff" stroke="#0a0a0a" stroke-width="1.5"/>
<text x="1675.8" y="334.11" font-size="7" fill="#262626" text-anchor="end" >seg_count_</text>
<path d="M1622.4,342.74 A2.2,2.2 0 0 0 1622.4,347.14" fill="#fff" stroke="#0a0a0a" stroke-width="1.5"/>
<text x="1675.8" y="346.79" font-size="7" fill="#262626" text-anchor="end" >colors_</text>
<path d="M1622.4,355.42 A2.2,2.2 0 0 0 1622.4,359.82" fill="#fff" stroke="#0a0a0a" stroke-width="1.5"/>
<text x="1675.8" y="359.47" font-size="7" fill="#262626" text-anchor="end" >continuous_leg_</text>
<path d="M1622.4,368.1 A2.2,2.2 0 0 0 1622.4,372.5" fill="#fff" stroke="#0a0a0a" stroke-width="1.5"/>
<text x="1675.8" y="372.15" font-size="7" fill="#262626" text-anchor="end" >num_decimals_</text>
<path d="M1622.4,380.78 A2.2,2.2 0 0 0 1622.4,385.18" fill="#fff" stroke="#0a0a0a" stroke-width="1.5"/>
<text x="1675.8" y="384.83" font-size="7" fill="#262626" text-anchor="end" >larger_smaller_</text>
<path d="M1622.4,393.46 A2.2,2.2 0 0 0 1622.4,397.86" fill="#fff" stroke="#0a0a0a" stroke-width="1.5"/>
<text x="1675.8" y="397.51" font-size="7" fill="#262626" text-anchor="end" >vert_or_horiz_</text>
<path d="M1622.4,406.14 A2.2,2.2 0 0 0 1622.4,410.54" fill="#fff" stroke="#0a0a0a" stroke-width="1.5"/>
<text x="1675.8" y="410.19" font-size="7" fill="#262626" text-anchor="end" >base_plane_</text>
<path d="M1622.4,418.82 A2.2,2.2 0 0 0 1622.4,423.22" fill="#fff" stroke="#0a0a0a" stroke-width="1.5"/>
<text x="1675.8" y="422.87" font-size="7" fill="#262626" text-anchor="end" >seg_height_</text>
<path d="M1622.4,431.5 A2.2,2.2 0 0 0 1622.4,435.9" fill="#fff" stroke="#0a0a0a" stroke-width="1.5"/>
<text x="1675.8" y="435.55" font-size="7" fill="#262626" text-anchor="end" >seg_width_</text>
<path d="M1622.4,444.18 A2.2,2.2 0 0 0 1622.4,448.58" fill="#fff" stroke="#0a0a0a" stroke-width="1.5"/>
<text x="1675.8" y="448.23" font-size="7" fill="#262626" text-anchor="end" >text_height_</text>
<path d="M1622.4,456.86 A2.2,2.2 0 0 0 1622.4,461.26" fill="#fff" stroke="#0a0a0a" stroke-width="1.5"/>
<text x="1675.8" y="460.91" font-size="7" fill="#262626" text-anchor="end" >font_</text>
<path d="M1726.5,380.7 A2.2,2.2 0 0 1 1726.5,385.1" fill="#fff" stroke="#0a0a0a" stroke-width="1.5"/>
<text x="1696" y="384.75" font-size="7" fill="#262626" text-anchor="start" >leg_par</text>
<g transform="translate(1680,376.6)"><rect x="0" y="0" width="3.8" height="3.5" fill="#e01020"/><rect x="0" y="3.5" width="3.8" height="3.3" fill="#ff5a10"/><rect x="0" y="6.8" width="3.8" height="3.3" fill="#10c0ff"/><rect x="0" y="10.1" width="3.8" height="3.6" fill="#1080e0"/><path d="M5,5 H11 Q12.5,5 12.5,7.5 Q12.5,10 11,10 H5 M5,13 H10" stroke="#444" stroke-width="1" fill="none"/></g>
<rect x="1586.8" y="369.7" width="20.2" height="12.5" rx="1.8" fill="#ffffff" stroke="#3a3a3a" stroke-width="1.1"/>
<text x="1592" y="378.5" font-size="6" fill="#b0b0b0" font-family="Liberation Serif">4</text>
<path d="M1586.8,373.8 A2.2,2.2 0 0 0 1586.8,378.2" fill="#fff" stroke="#0a0a0a" stroke-width="1.5"/>
<path d="M1607,373.8 A2.2,2.2 0 0 1 1607,378.2" fill="#fff" stroke="#0a0a0a" stroke-width="1.5"/>
<defs><linearGradient id="tunV" gradientUnits="userSpaceOnUse" x1="0" y1="365.2" x2="0" y2="504.5"><stop offset="0" stop-color="#fff" stop-opacity="0"/><stop offset="0.25" stop-color="#fff" stop-opacity="0.05"/><stop offset="0.5" stop-color="#fff" stop-opacity="0.19"/><stop offset="0.75" stop-color="#fff" stop-opacity="0.38"/><stop offset="1" stop-color="#fff" stop-opacity="0.6"/></linearGradient><linearGradient id="tunH" gradientUnits="userSpaceOnUse" x1="1092.3" y1="0" x2="1166.5" y2="0"><stop offset="0" stop-color="#fff" stop-opacity="0"/><stop offset="0.25" stop-color="#fff" stop-opacity="0.05"/><stop offset="0.5" stop-color="#fff" stop-opacity="0.19"/><stop offset="0.75" stop-color="#fff" stop-opacity="0.38"/><stop offset="1" stop-color="#fff" stop-opacity="0.6"/></linearGradient><linearGradient id="tunL1" gradientUnits="userSpaceOnUse" x1="0" y1="365.2" x2="0" y2="507.5"><stop offset="0" stop-color="#555" stop-opacity="0.35"/><stop offset="0.3" stop-color="#333" stop-opacity="0.85"/><stop offset="1" stop-color="#222" stop-opacity="1"/></linearGradient><linearGradient id="tunL2" gradientUnits="userSpaceOnUse" x1="1176.8" y1="0" x2="1783" y2="0"><stop offset="0" stop-color="#555" stop-opacity="0.25"/><stop offset="0.35" stop-color="#333" stop-opacity="0.8"/><stop offset="1" stop-color="#222" stop-opacity="1"/></linearGradient><linearGradient id="tunL3" gradientUnits="userSpaceOnUse" x1="0" y1="393.7" x2="0" y2="856"><stop offset="0" stop-color="#4a4a4a" stop-opacity="0.15"/><stop offset="1" stop-color="#333" stop-opacity="0.9"/></linearGradient></defs>
<path d="M1092.3,365.2 L1176.8,365.2 L1783,504.5 L1166.5,504.5 Z" fill="url(#tunV)"/>
<path d="M1092.3,365.2 L1166.5,504.5 L1166.5,856 L1152.3,856 L1092.3,393.7 Z" fill="url(#tunH)"/>
<path d="M1092.3,365.2 L1165.5,507.5" stroke="url(#tunL1)" stroke-width="1" fill="none"/>
<path d="M1176.8,365.2 L1783,504" stroke="url(#tunL2)" stroke-width="0.95" fill="none"/>
<path d="M1092.3,393.7 L1152.3,856" stroke="url(#tunL3)" stroke-width="0.9" fill="none"/>
<path d="M1176.8,393.7 L1301,504" stroke="#9a968e" stroke-opacity="0.5" stroke-width="0.8" stroke-dasharray="4,3" fill="none"/>
</g>
<rect x="744" y="845.5" width="1168" height="1.5" fill="#ffffff"/>
<rect x="744" y="847" width="1168" height="9" fill="#efefef"/>
<text x="1838" y="862" font-size="12" fill="#333">1.0.0008</text>
<path d="M1163.5,856 V507 Q1163.5,502 1168.5,502 H1800 V856 Z" fill="#000" fill-opacity="0.04"/>
<path d="M1166.5,856 V507.5 Q1166.5,503.5 1170.5,503.5 H1795 Q1799,503.5 1799,507.5 V856 Z" fill="#f0f0f0" stroke="#d4d4d4" stroke-width="1"/>
<path d="M1167,534 V508 Q1167,504 1171,504 H1794.5 Q1798.5,504 1798.5,508 V534 Z" fill="#f2f2f2"/>
<text x="1176" y="522.6" font-size="12" fill="#8a8a8a" textLength="175.5" lengthAdjust="spacingAndGlyphs">Grasshopper Python Script Editor</text>
<rect x="1779" y="511" width="18.7" height="18.7" fill="#d9d9d9"/>
<path d="M1785.5,517.5 L1791.2,523.2 M1791.2,517.5 L1785.5,523.2" stroke="#f4f4f4" stroke-width="1"/>
<rect x="1167" y="534" width="631.5" height="24.5" fill="#f0f0f0"/>
<text x="1183.3" y="549.6" font-size="12" fill="#000" textLength="17.5" lengthAdjust="spacingAndGlyphs">File</text>
<text x="1220.2" y="549.6" font-size="12" fill="#000" textLength="19.8" lengthAdjust="spacingAndGlyphs">Edit</text>
<text x="1259.3" y="549.6" font-size="12" fill="#000" textLength="27.6" lengthAdjust="spacingAndGlyphs">Tools</text>
<text x="1306.3" y="549.6" font-size="12" fill="#000" textLength="31" lengthAdjust="spacingAndGlyphs">Mode</text>
<text x="1356.3" y="549.6" font-size="12" fill="#000" textLength="24.7" lengthAdjust="spacingAndGlyphs">Help</text>
<rect x="1686" y="536" width="56" height="19.7" fill="#e6e6e6"/>
<rect x="1744" y="536" width="53.7" height="19.7" fill="#e6e6e6"/>
<defs><linearGradient id="btnG" x1="0" x2="0" y1="0" y2="1"><stop offset="0" stop-color="#a0a8a0"/><stop offset="1" stop-color="#0c2010"/></linearGradient></defs>
<path d="M1692,539.2 L1704.4,546 L1692,552.7 Z" fill="url(#btnG)"/>
<text x="1709" y="550" font-size="12" fill="#000" textLength="21" lengthAdjust="spacingAndGlyphs">Test</text>
<rect x="1750.4" y="539.8" width="13.3" height="12.9" fill="url(#btnG)"/>
<path d="M1752.5,546 L1756,550 L1762.5,543" stroke="#e8e8e8" stroke-width="1.3" fill="none"/>
<text x="1768.6" y="550" font-size="12" fill="#000" textLength="15.4" lengthAdjust="spacingAndGlyphs">OK</text>
<rect x="1167" y="558" width="632" height="273.8" fill="#f0f0f0"/>
<path d="M1167.5,831.8 V558.5 H1798.5 V831.8" stroke="#646464" stroke-width="1" fill="none"/>
<rect x="1185.5" y="559" width="596.5" height="255.8" fill="#ffffff"/>
<rect x="1185" y="559" width="1" height="255.8" fill="#8c8c8c"/>
<path d="M1207.5,560 V814" stroke="#9a9a9a" stroke-width="1" stroke-dasharray="1,2" fill="none"/>
<text x="1186.4" y="571.80" font-size="11" fill="#a09aa8">1</text>
<text x="1186.4" y="587.84" font-size="11" fill="#a09aa8">2</text>
<text x="1186.4" y="603.88" font-size="11" fill="#a09aa8">3</text>
<text x="1186.4" y="619.92" font-size="11" fill="#a09aa8">4</text>
<text x="1186.4" y="635.96" font-size="11" fill="#a09aa8">5</text>
<text x="1186.4" y="652.00" font-size="11" fill="#a09aa8">6</text>
<text x="1186.4" y="668.04" font-size="11" fill="#a09aa8">7</text>
<text x="1186.4" y="684.08" font-size="11" fill="#a09aa8">8</text>
<text x="1223.2" y="569.40" font-size="11.65" font-family="Liberation Mono" xml:space="preserve"><tspan fill="#0000ff" stroke="#0000ff" stroke-width="0.28">from</tspan><tspan fill="#000" stroke="#000" stroke-width="0.28"> ladybug_rhino.grasshopper </tspan><tspan fill="#0000ff" stroke="#0000ff" stroke-width="0.28">import</tspan><tspan fill="#000" stroke="#000" stroke-width="0.28"> all_required_inputs</tspan></text>
<text x="1223.2" y="617.52" font-size="11.65" font-family="Liberation Mono" xml:space="preserve"><tspan fill="#0000ff" stroke="#0000ff" stroke-width="0.28">if</tspan><tspan fill="#000" stroke="#000" stroke-width="0.28"> all_required_inputs(ghenv.Component):</tspan></text>
<text x="1223.2" y="633.56" font-size="11.65" font-family="Liberation Mono" xml:space="preserve"><tspan fill="#b0a898">····</tspan><tspan fill="#000" stroke="#000" stroke-width="0.28">model = _model.</tspan><tspan fill="#191970" stroke="#191970" stroke-width="0.28">duplicate</tspan><tspan fill="#000" stroke="#000" stroke-width="0.28">()</tspan></text>
<text x="1223.2" y="649.60" font-size="11.65" font-family="Liberation Mono" xml:space="preserve"><tspan fill="#b0a898">····</tspan><tspan fill="#000" stroke="#000" stroke-width="0.28">timestep = </tspan><tspan fill="#1a1a9a" stroke="#1a1a9a" stroke-width="0.28">6</tspan><tspan fill="#000" stroke="#000" stroke-width="0.28"> </tspan><tspan fill="#0000ff" stroke="#0000ff" stroke-width="0.28">if</tspan><tspan fill="#000" stroke="#000" stroke-width="0.28"> _timestep_ </tspan><tspan fill="#008b8b" stroke="#008b8b" stroke-width="0.28">is</tspan><tspan fill="#000" stroke="#000" stroke-width="0.28"> </tspan><tspan fill="#0000ff" stroke="#0000ff" stroke-width="0.28">None</tspan><tspan fill="#000" stroke="#000" stroke-width="0.28"> </tspan><tspan fill="#0000ff" stroke="#0000ff" stroke-width="0.28">else</tspan><tspan fill="#000" stroke="#000" stroke-width="0.28"> _timestep_</tspan></text>
<text x="1223.2" y="665.64" font-size="11.65" font-family="Liberation Mono" xml:space="preserve"><tspan fill="#b0a898">····</tspan><tspan fill="#000" stroke="#000" stroke-width="0.28">model.properties.energy.</tspan><tspan fill="#191970" stroke="#191970" stroke-width="0.28">balance_air_boundary_flows</tspan><tspan fill="#000" stroke="#000" stroke-width="0.28">(timestep)</tspan></text>
<rect x="1782" y="559" width="16" height="255.8" fill="#f0f0f0"/>
<rect x="1788.8" y="576" width="2" height="195" fill="#7a7a7a"/>
<rect x="1185.3" y="821.6" width="524.5" height="2" fill="#7a7a7a"/>
<rect x="1167" y="831" width="632" height="1" fill="#646464"/>
<rect x="1167" y="832" width="632" height="5" fill="#f0f0f0"/>
<rect x="1167" y="837" width="632" height="1" fill="#646464"/>
<rect x="1167.5" y="838" width="631" height="18" fill="#f0f0f0"/>
<rect x="1167.5" y="838" width="53.4" height="18" fill="#fafafa"/>
<rect x="1221.5" y="840" width="45.8" height="16" fill="#f0f0f0" stroke="#e0e0e0" stroke-width="1"/>
<rect x="1267.9" y="840" width="54.6" height="16" fill="#f0f0f0" stroke="#e0e0e0" stroke-width="1"/>
<text x="1176.3" y="853" font-size="12.4" fill="#000">Output</text>
<text x="1226.5" y="854.5" font-size="12.4" fill="#000">Help</text>
<text x="1274.2" y="854.5" font-size="12.4" fill="#000">Compile</text>
<path d="M1864,808 Q1866,797 1878,795" stroke="#000" stroke-width="3" fill="none"/><path d="M1858,801 L1866,800 L1863,809 Z" fill="#000"/>
<circle cx="1884.5" cy="815.2" r="19.6" fill="url(#navG)" stroke="#1a1a1a" stroke-width="1.3"/>
<circle cx="1884.5" cy="815.2" r="18.3" fill="none" stroke="#ffffff" stroke-width="1.4"/>
<path d="M1895.2,800.0 L1899.7,804.5 L1894.0,805.7 Z" fill="#ffffff"/>
<path d="M1869.3,804.5 L1873.8,800.0 L1875.0,805.7 Z" fill="#ffffff"/>
<path d="M1873.8,830.4 L1869.3,825.9 L1875.0,824.7 Z" fill="#ffffff"/>
<path d="M1899.7,825.9 L1895.2,830.4 L1894.0,824.7 Z" fill="#ffffff"/>
<rect x="744" y="817.5" width="62.5" height="27" fill="url(#silverG)" stroke="#000" stroke-width="1.3"/>
<rect x="746.8" y="819.4" width="22.5" height="23" rx="2.5" fill="url(#yelG)" stroke="#222" stroke-width="0.9"/>
<path d="M750,836.5 Q752,831 754,835 Q756,826 758,834 Q761,823 763,833 Q766,824 767,830" stroke="#a05000" stroke-width="1.6" fill="none"/>
<rect x="774.6" y="819.4" width="22.8" height="23" rx="2.5" fill="url(#silverG)" stroke="#222" stroke-width="0.9"/>
<rect x="781" y="822" width="10" height="18" fill="#1e1e1e"/><rect x="782" y="823" width="8" height="8" fill="#d8d8d8"/>
</svg>
</body></html>
